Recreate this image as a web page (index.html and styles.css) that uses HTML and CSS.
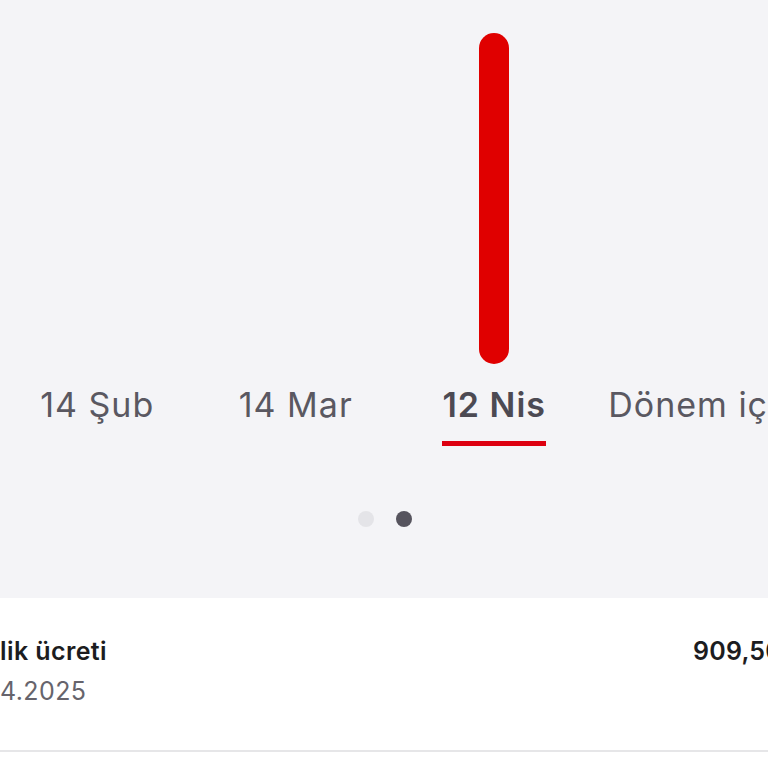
FILE: index.html
```html
<!DOCTYPE html>
<html lang="tr">
<head>
<meta charset="utf-8">
<link rel="stylesheet" href="styles.css">
</head>
<body>
<div class="page">
  <section class="chart">
    <div class="columns">
      <div class="col">
        <div class="bar-area"></div>
        <span class="label">14 Şub</span>
      </div>
      <div class="col">
        <div class="bar-area"></div>
        <span class="label">14 Mar</span>
      </div>
      <div class="col">
        <div class="bar-area"><div class="bar" style="height:331px"></div></div>
        <span class="label active">12 Nis</span>
      </div>
      <div class="col">
        <div class="bar-area"></div>
        <span class="label">Dönem içi</span>
      </div>
    </div>
    <div class="dots">
      <span class="dot"></span>
      <span class="dot current"></span>
    </div>
  </section>
  <section class="list">
    <div class="item">
      <div class="item-info">
        <div class="item-title">lik ücreti</div>
        <div class="item-date">4.2025</div>
      </div>
      <div class="item-amount">909,50 TL</div>
    </div>
  </section>
</div>
</body>
</html>
```

FILE: styles.css
```css
html, body {
  margin: 0;
  padding: 0;
  background: #ffffff;
}
body {
  width: 768px;
  height: 768px;
  overflow: hidden;
  font-family: Inter, "Open Sans", sans-serif;
}
.page {
  width: 768px;
  overflow: hidden;
}
.chart {
  background: #f4f4f7;
  height: 598px;
  overflow: hidden;
}
.columns {
  display: flex;
  margin-left: -2px;
  width: 900px;
}
.col {
  flex: 0 0 198.5px;
  display: flex;
  flex-direction: column;
  align-items: center;
}
.bar-area {
  height: 364px;
  display: flex;
  align-items: flex-end;
  justify-content: center;
}
.bar {
  width: 30px;
  background: #e00000;
  border-radius: 15px;
}
.label {
  margin-top: 21px;
  font-size: 34px;
  line-height: 40px;
  letter-spacing: 1px;
  color: #5a5861;
  white-space: nowrap;
  padding-bottom: 16px;
  border-bottom: 5px solid transparent;
}
.label.active {
  font-weight: 600;
  color: #4c4a53;
  border-bottom-color: #dd0010;
}
.dots {
  display: flex;
  justify-content: center;
  gap: 22px;
  margin-top: 65px;
  padding-left: 1px;
}
.dot {
  width: 16px;
  height: 16px;
  border-radius: 50%;
  background: #e4e4e8;
}
.dot.current {
  background: #56545e;
}
.list {
  background: #ffffff;
}
.item {
  display: flex;
  justify-content: space-between;
  align-items: flex-start;
  height: 152px;
  border-bottom: 2px solid #e6e6e8;
  width: 800px;
}
.item-info {
  padding-top: 37px;
}
.item-title {
  font-size: 25px;
  line-height: 32px;
  letter-spacing: 0.4px;
  font-weight: 600;
  color: #1c1c20;
}
.item-date {
  margin-top: 8px;
  font-size: 25px;
  line-height: 32px;
  letter-spacing: 0.4px;
  color: #66646c;
}
.item-amount {
  padding-top: 37px;
  font-size: 25px;
  line-height: 32px;
  letter-spacing: 0.2px;
  font-weight: 600;
  color: #1c1c20;
  width: 107px;
  white-space: nowrap;
}
```
